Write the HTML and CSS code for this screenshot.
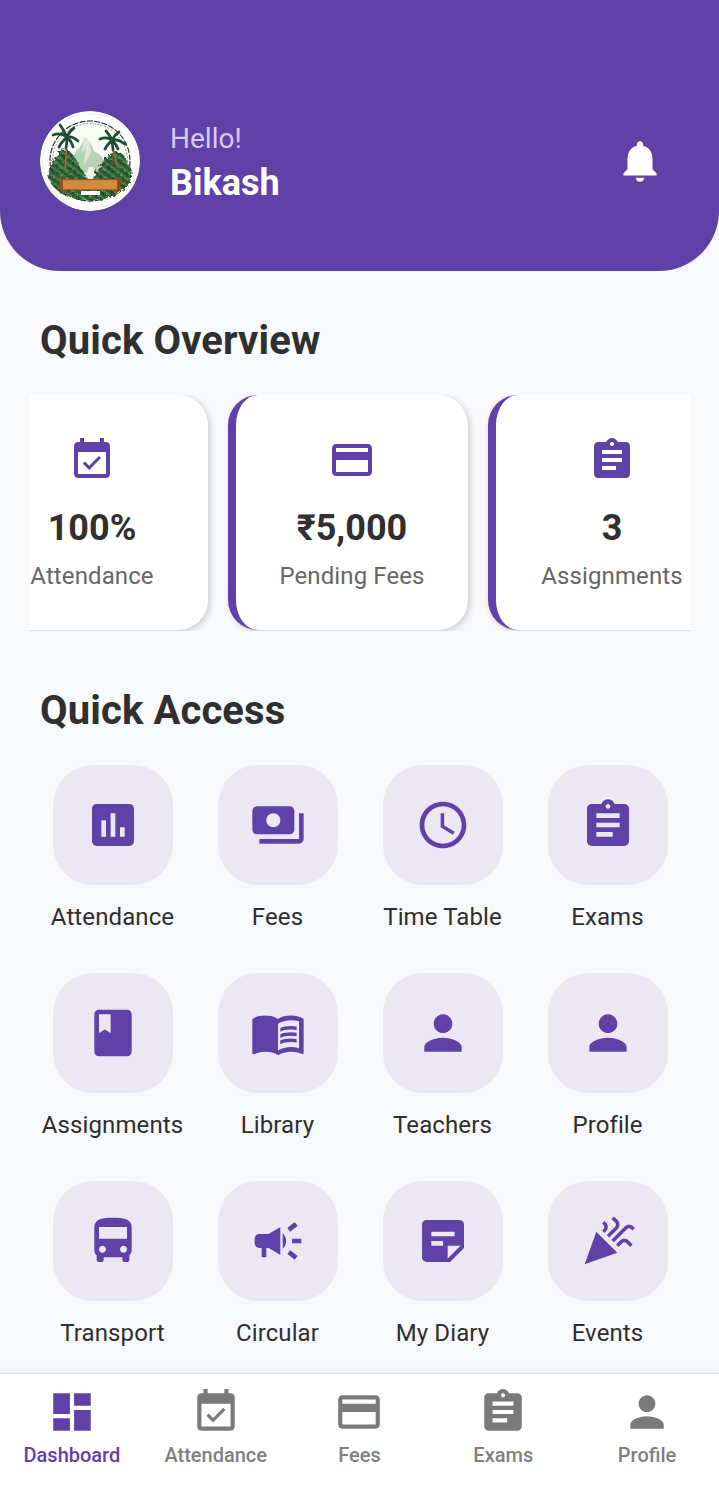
FILE: index.html
```html
<!DOCTYPE html>
<html lang="en">
<head>
<meta charset="utf-8">
<title>Dashboard</title>
<link rel="stylesheet" href="styles.css">
</head>
<body>
<div class="page">
  <header class="hero">
    <svg class="avatar" viewBox="0 0 100 100" role="img" aria-label="School emblem">
      <defs>
        <pattern id="leaves" width="6" height="6" patternUnits="userSpaceOnUse" patternTransform="rotate(37)">
          <rect width="6" height="6" fill="#2f6238"/>
          <path d="M0 2 L3 0 L3.5 2.5 L1 3.5 Z" fill="#5f9450"/>
          <path d="M3 3 L6 2.5 L5.5 6 L2.5 5 Z" fill="#1f4a2d"/>
          <path d="M4 .5 L5.5 1 L4.5 2 Z" fill="#8eb56e"/>
        </pattern>
        <filter id="rough" x="-10%" y="-10%" width="120%" height="120%">
          <feTurbulence type="fractalNoise" baseFrequency=".3" numOctaves="2" seed="4" result="noise"/>
          <feDisplacementMap in="SourceGraphic" in2="noise" scale="6"/>
        </filter>
      </defs>
      <circle cx="50" cy="50" r="50" fill="#fff"/>
      <circle cx="50" cy="50" r="47.5" fill="none" stroke="#efe9e0" stroke-width=".7"/>
      <circle cx="50" cy="50" r="40" fill="#f8faf6"/>
      <circle cx="50" cy="50" r="40" fill="none" stroke="#1f2a24" stroke-width="1.1" stroke-dasharray="6 1.4"/>
      <circle cx="50" cy="50" r="37.5" fill="none" stroke="#4d5c52" stroke-width=".6" stroke-dasharray="2 1.6"/>
      <path d="M26 62 L36 40 L41 35 L45 26 L50 31 L54 40 L60 44 L74 62 Z" fill="#b9d2b5"/>
      <path d="M45 26 L41 42 L46 37 L44 54 L51 42 L50 31 Z" fill="#dce8d8"/>
      <path d="M43 72 L49 56 L53 56 L58 72 Z" fill="#eef2e6"/>
      <g filter="url(#rough)">
        <path d="M8 63 C10 54 13 48 17 44 C20 37 29 37 32 43 C36 46 38 54 41 58 C46 62 48 68 46 72 L46 88 L24 84 C14 78 9 72 8 63 Z" fill="url(#leaves)"/>
        <path d="M92 63 C90 54 87 50 84 45 C81 39 71 40 68 46 C63 48 62 54 59 58 C54 62 52 68 54 72 L54 88 L76 84 C86 78 91 72 92 63 Z" fill="url(#leaves)"/>
        <path d="M24 82 C32 92 68 92 76 82 L76 78 L24 78 Z" fill="url(#leaves)"/>
      </g>
      <path d="M26 35 C27 42 26 50 25 58" fill="none" stroke="#a8682c" stroke-width="1.6"/>
      <path d="M73 38 C74 44 76 50 78 57" fill="none" stroke="#a8682c" stroke-width="1.6"/>
      <g fill="none" stroke="#1d4d33" stroke-width="2.8" stroke-linecap="round">
        <path d="M27 26 C22 22 18 22 13 24"/>
        <path d="M27 26 C24 20 23 18 20 14"/>
        <path d="M27 26 C29 21 31 19 34 17"/>
        <path d="M27 26 C32 25 35 27 38 30"/>
        <path d="M27 26 C24 29 21 31 19 36"/>
        <path d="M27 26 C27 30 27 33 26 37"/>
        <path d="M27 26 C30 29 32 32 33 36"/>
        <path d="M72 29 C68 26 65 26 60 28"/>
        <path d="M72 29 C70 25 69 23 66 20"/>
        <path d="M72 29 C74 25 76 23 79 21"/>
        <path d="M72 29 C77 28 80 30 85 33"/>
        <path d="M72 29 C69 32 67 34 65 38"/>
        <path d="M72 29 C72 33 73 35 73 39"/>
        <path d="M72 29 C75 32 77 35 78 38"/>
      </g>
      <path d="M18 66 L26 68 L26 82 L21 81 Z M82 66 L74 68 L74 82 L79 81 Z" fill="#8a4f20"/>
      <rect x="23" y="68" width="54" height="11" fill="#d68a40"/>
      <rect x="23" y="68" width="54" height="1.2" fill="#8a5a2a"/>
      <rect x="23" y="78" width="54" height="1.2" fill="#9c6228"/>
      <rect x="41" y="80" width="19" height="4" fill="#fff"/>
    </svg>
    <div class="greeting">
      <span class="hello">Hello!</span>
      <strong class="name">Bikash</strong>
    </div>
    <svg class="bell" viewBox="0 0 24 24"><path d="M12 22c1.1 0 2-.9 2-2h-4c0 1.1.89 2 2 2zm6-6v-5c0-3.07-1.64-5.64-4.5-6.32V4c0-.83-.67-1.5-1.5-1.5s-1.5.67-1.5 1.5v.68C7.63 5.36 6 7.92 6 11v5l-2 2v1h16v-1l-2-2z"/></svg>
  </header>

  <main class="content">
    <h2 class="section-title">Quick Overview</h2>
    <div class="overview">
      <article class="stat stat-first">
        <svg class="stat-icon" viewBox="0 0 24 24"><path d="M16.53 11.06L15.47 10l-4.88 4.88-2.12-2.12-1.06 1.06L10.59 17l5.94-5.94zM19 3h-1V1h-2v2H8V1H6v2H5c-1.11 0-1.99.9-1.99 2L3 19c0 1.1.89 2 2 2h14c1.1 0 2-.9 2-2V5c0-1.1-.9-2-2-2zm0 16H5V8h14v11z"/></svg>
        <div class="stat-value">100%</div>
        <div class="stat-label">Attendance</div>
      </article>
      <article class="stat">
        <svg class="stat-icon" viewBox="0 0 24 24"><path d="M20 4H4c-1.11 0-1.99.89-1.99 2L2 18c0 1.11.89 2 2 2h16c1.11 0 2-.89 2-2V6c0-1.11-.89-2-2-2zm0 14H4v-6h16v6zm0-10H4V6h16v2z"/></svg>
        <div class="stat-value">₹5,000</div>
        <div class="stat-label">Pending Fees</div>
      </article>
      <article class="stat">
        <svg class="stat-icon" viewBox="0 0 24 24"><path d="M19 3h-4.18C14.4 1.84 13.3 1 12 1c-1.3 0-2.4.84-2.82 2H5c-1.1 0-2 .9-2 2v14c0 1.1.9 2 2 2h14c1.1 0 2-.9 2-2V5c0-1.1-.9-2-2-2zm-7 0c.55 0 1 .45 1 1s-.45 1-1 1-1-.45-1-1 .45-1 1-1zm2 14H7v-2h7v2zm3-4H7v-2h10v2zm0-4H7V7h10v2z"/></svg>
        <div class="stat-value">3</div>
        <div class="stat-label">Assignments</div>
      </article>
    </div>

    <h2 class="section-title section-title-access">Quick Access</h2>
    <div class="access">
      <a class="tile"><span class="tile-box"><svg class="tile-icon" viewBox="0 0 24 24"><path d="M19 3H5c-1.1 0-2 .9-2 2v14c0 1.1.9 2 2 2h14c1.1 0 2-.9 2-2V5c0-1.1-.9-2-2-2zM9 17H7v-7h2v7zm4 0h-2V7h2v10zm4 0h-2v-4h2v4z"/></svg></span><span class="tile-label">Attendance</span></a>
      <a class="tile"><span class="tile-box"><svg class="tile-icon" viewBox="0 0 24 24"><path d="M19 14V6c0-1.1-.9-2-2-2H3c-1.1 0-2 .9-2 2v8c0 1.1.9 2 2 2h14c1.1 0 2-.9 2-2zm-9-1c-1.66 0-3-1.34-3-3s1.34-3 3-3 3 1.34 3 3-1.34 3-3 3zm13-6v11c0 1.1-.9 2-2 2H4v-2h17V7h2z"/></svg></span><span class="tile-label">Fees</span></a>
      <a class="tile"><span class="tile-box"><svg class="tile-icon" viewBox="0 0 24 24"><path d="M11.99 2C6.47 2 2 6.48 2 12s4.47 10 9.99 10C17.52 22 22 17.52 22 12S17.52 2 11.99 2zM12 20c-4.42 0-8-3.58-8-8s3.58-8 8-8 8 3.58 8 8-3.58 8-8 8zm.5-13H11v6l5.25 3.15.75-1.23-4.5-2.67z"/></svg></span><span class="tile-label">Time Table</span></a>
      <a class="tile"><span class="tile-box"><svg class="tile-icon" viewBox="0 0 24 24"><path d="M19 3h-4.18C14.4 1.84 13.3 1 12 1c-1.3 0-2.4.84-2.82 2H5c-1.1 0-2 .9-2 2v14c0 1.1.9 2 2 2h14c1.1 0 2-.9 2-2V5c0-1.1-.9-2-2-2zm-7 0c.55 0 1 .45 1 1s-.45 1-1 1-1-.45-1-1 .45-1 1-1zm2 14H7v-2h7v2zm3-4H7v-2h10v2zm0-4H7V7h10v2z"/></svg></span><span class="tile-label">Exams</span></a>

      <a class="tile"><span class="tile-box"><svg class="tile-icon" viewBox="0 0 24 24"><path d="M18 2H6c-1.1 0-2 .9-2 2v16c0 1.1.9 2 2 2h12c1.1 0 2-.9 2-2V4c0-1.1-.9-2-2-2zM6 4h5v8l-2.5-1.5L6 12V4z"/></svg></span><span class="tile-label">Assignments</span></a>
      <a class="tile"><span class="tile-box"><svg class="tile-icon" viewBox="0 0 24 24"><path d="M21 5c-1.11-.35-2.33-.5-3.5-.5-1.95 0-4.05.4-5.5 1.5-1.45-1.1-3.55-1.5-5.5-1.5S2.45 4.9 1 6v14.65c0 .25.25.5.5.5.1 0 .15-.05.25-.05C3.1 20.45 5.05 20 6.5 20c1.95 0 4.05.4 5.5 1.5 1.35-.85 3.8-1.5 5.5-1.5 1.65 0 3.35.3 4.75 1.05.1.05.15.05.25.05.25 0 .5-.25.5-.5V6c-.6-.45-1.25-.75-2-1zm0 13.5c-1.1-.35-2.3-.5-3.5-.5-1.7 0-4.15.65-5.5 1.5V8c1.35-.85 3.8-1.5 5.5-1.5 1.2 0 2.4.15 3.5.5v11.5z"/><path d="M17.5 10.5c.88 0 1.73.09 2.5.26V9.24c-.79-.15-1.64-.24-2.5-.24-1.7 0-3.24.29-4.5.83v1.66c1.13-.64 2.7-.99 4.5-.99zM13 12.49v1.66c1.13-.64 2.7-.99 4.5-.99.88 0 1.73.09 2.5.26V11.9c-.79-.15-1.64-.24-2.5-.24-1.7 0-3.24.3-4.5.83zM17.5 14.33c-1.7 0-3.24.29-4.5.83v1.66c1.13-.64 2.7-.99 4.5-.99.88 0 1.73.09 2.5.26v-1.52c-.79-.16-1.64-.24-2.5-.24z"/></svg></span><span class="tile-label">Library</span></a>
      <a class="tile"><span class="tile-box"><svg class="tile-icon" viewBox="0 0 24 24"><path d="M12 12c2.21 0 4-1.79 4-4s-1.79-4-4-4-4 1.79-4 4 1.79 4 4 4zm0 2c-2.67 0-8 1.34-8 4v2h16v-2c0-2.66-5.33-4-8-4z"/></svg></span><span class="tile-label">Teachers</span></a>
      <a class="tile"><span class="tile-box"><svg class="tile-icon" viewBox="0 0 24 24"><path d="M12 12c2.21 0 4-1.79 4-4s-1.79-4-4-4-4 1.79-4 4 1.79 4 4 4zm0 2c-2.67 0-8 1.34-8 4v2h16v-2c0-2.66-5.33-4-8-4z"/></svg></span><span class="tile-label">Profile</span></a>

      <a class="tile"><span class="tile-box"><svg class="tile-icon" viewBox="0 0 24 24"><path d="M4 16c0 .88.39 1.67 1 2.22V20c0 .55.45 1 1 1h1c.55 0 1-.45 1-1v-1h8v1c0 .55.45 1 1 1h1c.55 0 1-.45 1-1v-1.78c.61-.55 1-1.34 1-2.22V6c0-3.5-3.58-4-8-4s-8 .5-8 4v10zm3.5 1c-.83 0-1.5-.67-1.5-1.5S6.67 14 7.5 14s1.5.67 1.5 1.5S8.33 17 7.5 17zm9 0c-.83 0-1.5-.67-1.5-1.5s.67-1.5 1.5-1.5 1.5.67 1.5 1.5-.67 1.5-1.5 1.5zm1.5-6H6V6h12v5z"/></svg></span><span class="tile-label">Transport</span></a>
      <a class="tile"><span class="tile-box"><svg class="tile-icon" viewBox="0 0 24 24"><path d="M18 11v2h4v-2h-4zm-2 6.61c.96.71 2.21 1.65 3.2 2.39.4-.53.8-1.07 1.2-1.6-.99-.74-2.24-1.68-3.2-2.4-.4.54-.8 1.08-1.2 1.61zM20.4 5.6c-.4-.53-.8-1.07-1.2-1.6-.99.74-2.24 1.68-3.2 2.4.4.53.8 1.07 1.2 1.6.96-.72 2.21-1.65 3.2-2.4zM4 9c-1.1 0-2 .9-2 2v2c0 1.1.9 2 2 2h1v4h2v-4h1l5 3V6L8 9H4zm11.5 3c0-1.33-.58-2.53-1.5-3.35v6.69c.92-.81 1.5-2.01 1.5-3.34z"/></svg></span><span class="tile-label">Circular</span></a>
      <a class="tile"><span class="tile-box"><svg class="tile-icon" viewBox="0 0 24 24"><path d="M19 3H4.99C3.89 3 3 3.9 3 5l.01 14c0 1.1.89 2 1.99 2h10l6-6V5c0-1.1-.9-2-2-2zM7 8h10v2H7V8zm5 6H7v-2h5v2zm2 5.5V14h5.5L14 19.5z"/></svg></span><span class="tile-label">My Diary</span></a>
      <a class="tile"><span class="tile-box"><svg class="tile-icon" viewBox="0 0 24 24"><path d="M2 22l14-5-9-9zM14.53 12.53l5.59-5.59c.49-.49 1.28-.49 1.77 0l.59.59 1.06-1.06-.59-.59c-1.07-1.07-2.82-1.07-3.89 0l-5.59 5.59 1.06 1.06zM10.06 6.88l-.59.59 1.06 1.06.59-.59c1.07-1.07 1.07-2.82 0-3.89l-.59-.59-1.06 1.06.59.59c.48.48.48 1.28 0 1.77zM17.06 11.88l-1.59 1.59 1.06 1.06 1.59-1.59c.49-.49 1.28-.49 1.77 0l1.61 1.61 1.06-1.06-1.61-1.61c-1.08-1.07-2.82-1.07-3.89 0zM15.06 5.88l-3.59 3.59 1.06 1.06 3.59-3.59c1.07-1.07 1.07-2.82 0-3.89l-1.59-1.59-1.06 1.06 1.59 1.59c.48.49.48 1.29 0 1.77z"/></svg></span><span class="tile-label">Events</span></a>
    </div>
  </main>

  <nav class="tabs">
    <a class="tab tab-active"><svg class="tab-icon" viewBox="0 0 24 24"><path d="M3 13h8V3H3v10zm0 8h8v-6H3v6zm10 0h8V11h-8v10zm0-18v6h8V3h-8z"/></svg><span class="tab-label">Dashboard</span></a>
    <a class="tab"><svg class="tab-icon" viewBox="0 0 24 24"><path d="M16.53 11.06L15.47 10l-4.88 4.88-2.12-2.12-1.06 1.06L10.59 17l5.94-5.94zM19 3h-1V1h-2v2H8V1H6v2H5c-1.11 0-1.99.9-1.99 2L3 19c0 1.1.89 2 2 2h14c1.1 0 2-.9 2-2V5c0-1.1-.9-2-2-2zm0 16H5V8h14v11z"/></svg><span class="tab-label">Attendance</span></a>
    <a class="tab"><svg class="tab-icon" viewBox="0 0 24 24"><path d="M20 4H4c-1.11 0-1.99.89-1.99 2L2 18c0 1.11.89 2 2 2h16c1.11 0 2-.89 2-2V6c0-1.11-.89-2-2-2zm0 14H4v-6h16v6zm0-10H4V6h16v2z"/></svg><span class="tab-label">Fees</span></a>
    <a class="tab"><svg class="tab-icon" viewBox="0 0 24 24"><path d="M19 3h-4.18C14.4 1.84 13.3 1 12 1c-1.3 0-2.4.84-2.82 2H5c-1.1 0-2 .9-2 2v14c0 1.1.9 2 2 2h14c1.1 0 2-.9 2-2V5c0-1.1-.9-2-2-2zm-7 0c.55 0 1 .45 1 1s-.45 1-1 1-1-.45-1-1 .45-1 1-1zm2 14H7v-2h7v2zm3-4H7v-2h10v2zm0-4H7V7h10v2z"/></svg><span class="tab-label">Exams</span></a>
    <a class="tab"><svg class="tab-icon" viewBox="0 0 24 24"><path d="M12 12c2.21 0 4-1.79 4-4s-1.79-4-4-4-4 1.79-4 4 1.79 4 4 4zm0 2c-2.67 0-8 1.34-8 4v2h16v-2c0-2.66-5.33-4-8-4z"/></svg><span class="tab-label">Profile</span></a>
  </nav>
</div>
</body>
</html>
```

FILE: styles.css
```css
* { box-sizing: border-box; }

html, body { margin: 0; padding: 0; }

body {
  font-family: Roboto, "Noto Sans", sans-serif;
  background: #f8f9fb;
  color: #2e2e2e;
}

.page {
  width: 719px;
  height: 1486px;
  display: flex;
  flex-direction: column;
  overflow: hidden;
}

/* Header */
.hero {
  height: 271px;
  flex: none;
  background: #6041a7;
  border-radius: 0 0 60px 60px;
  padding: 111px 54px 0 40px;
  display: flex;
  align-items: flex-start;
}

.avatar {
  width: 100px;
  height: 100px;
  flex: none;
  border-radius: 50%;
}

.greeting {
  display: flex;
  flex-direction: column;
  margin-left: 30px;
  flex: 1;
}

.hello {
  font-size: 28px;
  line-height: 32px;
  margin-top: 12px;
  color: #d9c9f3;
}

.name {
  font-size: 36px;
  line-height: 44px;
  margin-top: 6px;
  font-weight: 700;
  color: #fff;
}

.bell {
  width: 50px;
  height: 50px;
  margin-top: 25px;
  fill: #fff;
}

/* Content */
.content {
  flex: 1;
  min-height: 0;
  overflow: hidden;
}

.section-title {
  margin: 47px 40px 31px;
  font-size: 40px;
  line-height: 46px;
  font-weight: 700;
  letter-spacing: .12px;
  color: #303030;
}

.section-title-access {
  margin-top: 57px;
}

.overview {
  margin: 0 29px 0 30px;
  height: 236px;
  display: flex;
  gap: 20px;
  overflow: hidden;
}

.stat {
  flex: none;
  width: 240px;
  height: 235px;
  padding-top: 41px;
  background: #fff;
  border-left: 8px solid #6041a7;
  border-radius: 30px;
  box-shadow: 2px 2px 6px rgba(0, 0, 0, .18);
  display: flex;
  flex-direction: column;
  align-items: center;
}

.stat-first {
  margin-left: -62px;
}

.stat-icon {
  width: 48px;
  height: 48px;
  fill: #6041a7;
}

.stat-value {
  margin-top: 23px;
  font-size: 36px;
  line-height: 42px;
  font-weight: 700;
  color: #303030;
}

.stat-label {
  margin-top: 12px;
  font-size: 24px;
  line-height: 30px;
  letter-spacing: .1px;
  color: #666;
  white-space: nowrap;
}

/* Quick access grid */
.access {
  margin: 0 30px;
  display: grid;
  grid-template-columns: repeat(4, 165px);
  row-gap: 41px;
}

.tile {
  display: flex;
  flex-direction: column;
  align-items: center;
}

.tile-box {
  width: 120px;
  height: 120px;
  border-radius: 40px;
  background: #ece8f3;
  display: flex;
  align-items: center;
  justify-content: center;
}

.tile-icon {
  width: 56px;
  height: 56px;
  fill: #6041a7;
}

.tile-label {
  margin-top: 17px;
  font-size: 24px;
  line-height: 30px;
  letter-spacing: .1px;
  color: #2e2e2e;
  white-space: nowrap;
}

/* Bottom tabs */
.tabs {
  flex: none;
  height: 113px;
  background: #fff;
  border-top: 1px solid #e3e4e7;
  box-shadow: 0 -3px 5px rgba(0, 0, 0, .04);
  padding-top: 13px;
  display: flex;
  position: relative;
}

.tab {
  flex: 1;
  display: flex;
  flex-direction: column;
  align-items: center;
  color: #808080;
}

.tab-icon {
  width: 50px;
  height: 50px;
  fill: #7a7a7a;
}

.tab-label {
  margin-top: 5px;
  font-size: 20px;
  line-height: 26px;
  font-weight: 500;
}

.tab-active { color: #6041a7; }

.tab-active .tab-icon { fill: #6041a7; }
```
